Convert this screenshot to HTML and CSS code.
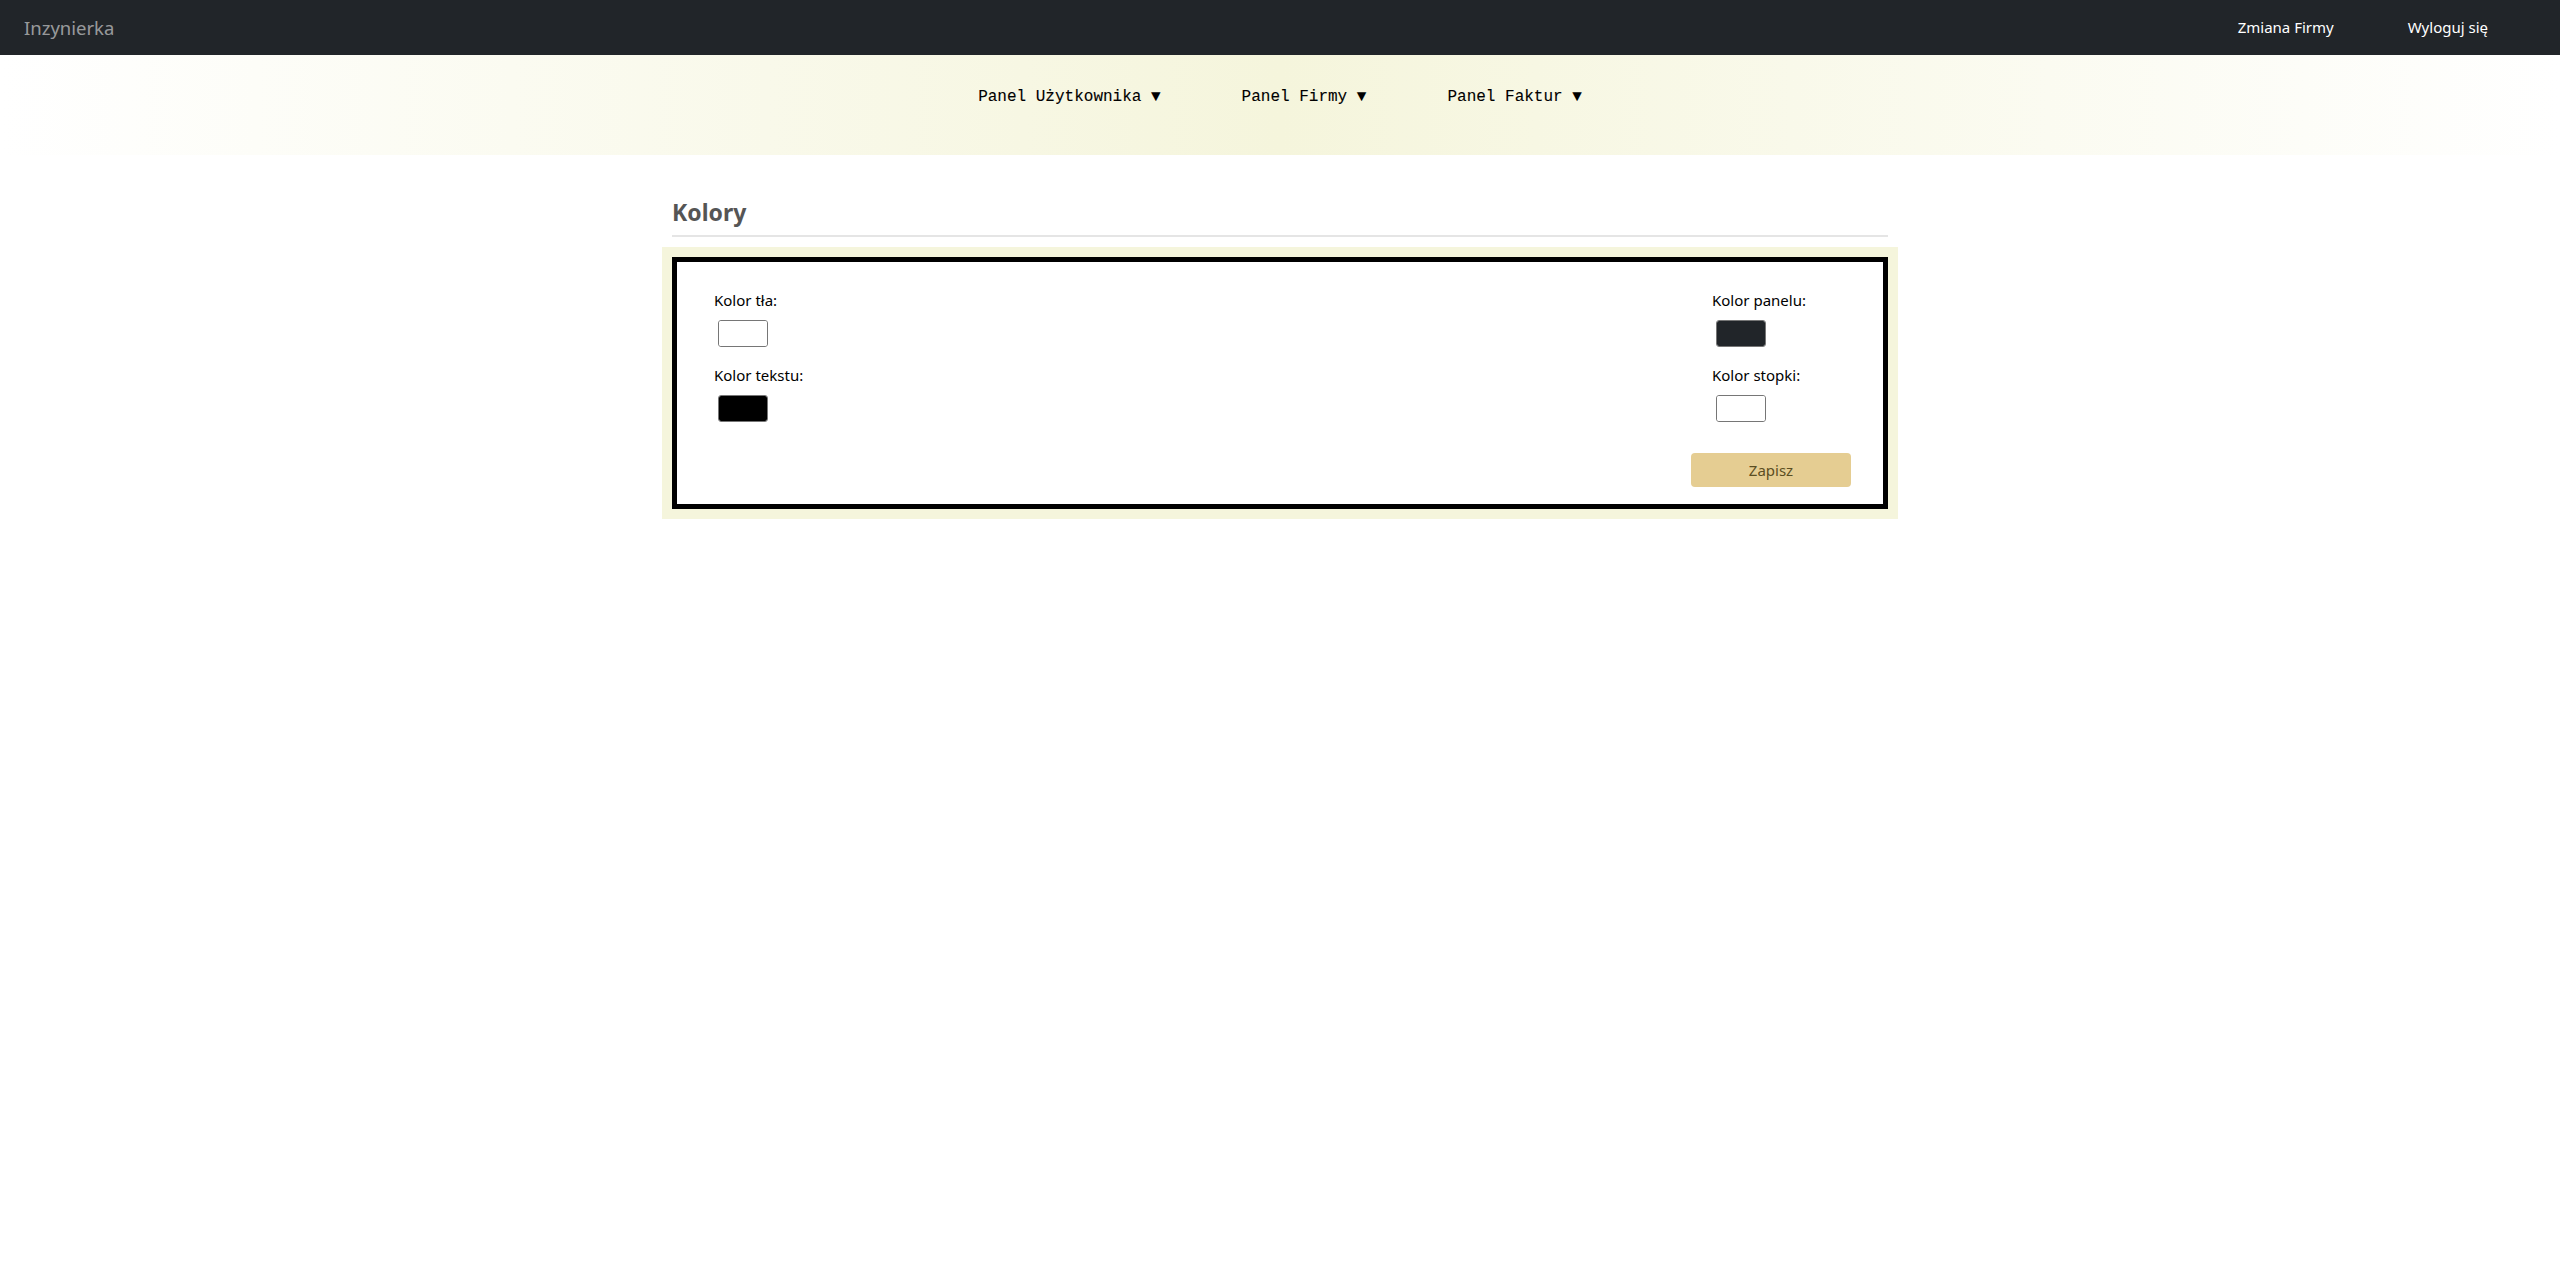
FILE: index.html
```html
<!DOCTYPE html>
<html lang="pl">
<head>
<meta charset="utf-8">
<title>Kolory</title>
<link rel="stylesheet" href="styles.css">
</head>
<body>
<header class="topbar">
  <a class="brand" href="#">Inzynierka</a>
  <nav class="top-links">
    <a class="top-link" href="#">Zmiana Firmy</a>
    <a class="top-link" href="#">Wyloguj się</a>
  </nav>
</header>
<nav class="subnav">
  <div class="subnav-items">
    <span class="subnav-item">Panel Użytkownika ▼</span>
    <span class="subnav-item">Panel Firmy ▼</span>
    <span class="subnav-item">Panel Faktur ▼</span>
  </div>
</nav>
<main class="page">
  <section class="colors">
    <h2 class="section-title">Kolory</h2>
    <hr class="section-rule">
    <div class="frame">
      <form class="panel">
        <div class="col col-left">
          <div class="field">
            <label class="field-label" for="bg">Kolor tła:</label>
            <input class="swatch" type="color" id="bg" value="#ffffff">
          </div>
          <div class="field">
            <label class="field-label" for="fg">Kolor tekstu:</label>
            <input class="swatch" type="color" id="fg" value="#000000">
          </div>
        </div>
        <div class="col col-right">
          <div class="field">
            <label class="field-label" for="nav">Kolor panelu:</label>
            <input class="swatch" type="color" id="nav" value="#212529">
          </div>
          <div class="field">
            <label class="field-label" for="foot">Kolor stopki:</label>
            <input class="swatch" type="color" id="foot" value="#ffffff">
          </div>
          <button class="save" type="button">Zapisz</button>
        </div>
      </form>
    </div>
  </section>
</main>
</body>
</html>
```
FILE: styles.css
```css
* { box-sizing: border-box; }
html, body { margin: 0; padding: 0; }
body {
  font-family: "Noto Sans", "Open Sans", sans-serif;
  font-size: 16px;
  line-height: 1.5;
  color: #000;
  background: #fff;
}
.topbar {
  height: 55px;
  background: #212529;
  display: flex;
  align-items: center;
  justify-content: space-between;
  padding: 0 72px 0 24px;
}
.brand {
  color: rgba(255,255,255,.55);
  font-size: 18.5px;
  text-decoration: none;
}
.top-links { display: flex; gap: 74px; }
.top-link {
  color: #fff;
  text-decoration: none;
  font-size: 15px;
}
.subnav {
  height: 100px;
  background: linear-gradient(90deg, #ffffff 0%, #f5f5dc 50%, #ffffff 100%);
  display: flex;
  justify-content: center;
  padding-top: 32px;
}
.subnav-items { display: flex; gap: 81px; height: 20px; }
.subnav-item {
  font-family: "Liberation Mono", "Courier New", monospace;
  font-size: 16px;
  line-height: 20px;
  color: #000;
  -webkit-text-stroke: 0.1px #000;
}
.page { padding-top: 42px; }
.colors { width: 1236px; margin: 0 auto; }
.section-title {
  margin: 0 10px;
  font-size: 23px;
  line-height: 30px;
  font-weight: 700;
  color: #555;
}
.section-rule {
  margin: 8px 10px 10px;
  border: 0;
  border-top: 2px solid #e5e5e5;
  height: 0;
}
.frame {
  background: #f5f5dc;
  padding: 10px;
}
.panel {
  background: #fff;
  border: 5px solid #000;
  display: flex;
  justify-content: space-between;
  padding: 26px 32px 15px 37px;
  min-height: 252px;
}
.col { display: flex; flex-direction: column; }
.col-right { width: 160px; }
.col-right .field { padding-left: 21px; }
.field { display: flex; flex-direction: column; align-items: flex-start; margin-bottom: 16px; }
.field:last-of-type { margin-bottom: 0; }
.field-label {
  font-size: 15px;
  line-height: 24px;
  margin-bottom: 8px;
}
.swatch {
  -webkit-appearance: none;
  appearance: none;
  width: 50px;
  height: 27px;
  margin: 0 0 0 4px;
  padding: 0;
  border: 1.5px solid #767676;
  border-radius: 3px;
  background: #fff;
  cursor: pointer;
}
.swatch::-webkit-color-swatch-wrapper { padding: 0; }
.swatch::-webkit-color-swatch { border: none; border-radius: 1px; }
.swatch::-moz-color-swatch { border: none; }
.save {
  margin-top: 31px;
  width: 160px;
  height: 34px;
  border: none;
  border-radius: 4px;
  background: #e5cd92;
  color: #5b4e22;
  font-family: inherit;
  font-size: 15px;
  line-height: 24px;
  cursor: pointer;
}
```
